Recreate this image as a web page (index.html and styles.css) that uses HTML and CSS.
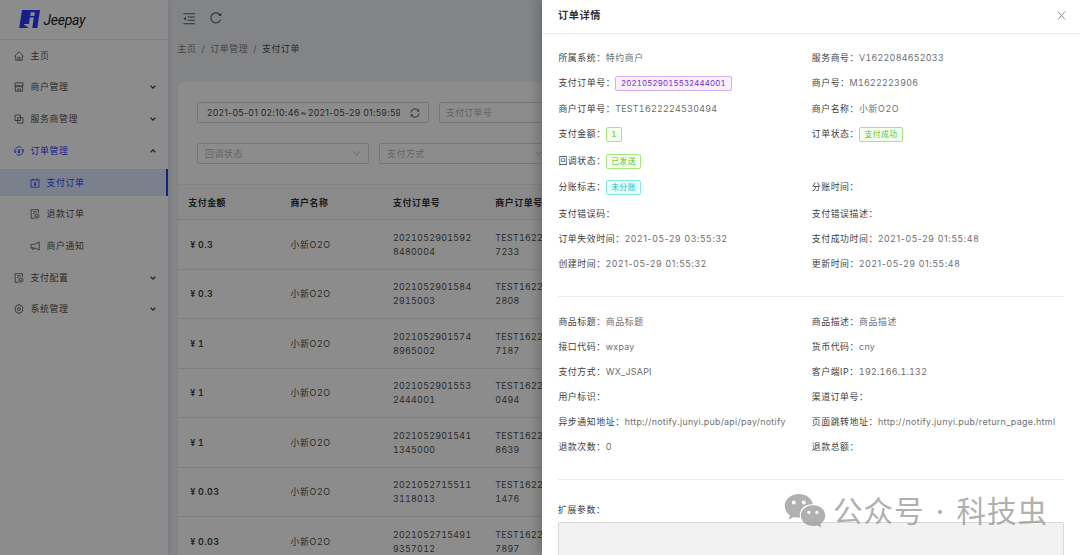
FILE: index.html
```html
<!DOCTYPE html>
<html lang="zh-CN">
<head>
<meta charset="utf-8">
<title>Jeepay</title>
<link rel="stylesheet" href="styles.css">
</head>
<body>
<svg class="defs" aria-hidden="true">
  <symbol id="chev" viewBox="0 0 8 8"><path d="M1.7 2.8 4 5.1 6.3 2.8" stroke-width="1.3"/></symbol>
  <symbol id="chev-l" viewBox="0 0 10 10"><path d="M1.6 2.6 5 7 8.4 2.6" stroke-width=".8"/></symbol>
  <symbol id="doc" viewBox="0 0 10 10"><path d="M4.6 9.3H1.2V.7h7.2v3.5M3 2.9h3.8M3 4.8h1.8"/><circle cx="7" cy="7.2" r="2"/><path d="m6.2 7.2.6.7 1.1-1.3"/></symbol>
</svg>
<div class="app">
  <aside class="side">
    <div class="logo">
      <svg class="logo-mark" viewBox="0 0 21 18"><path class="fill" d="M3 0H21L18.3 18H.2Z"/><path class="cut" d="M11.800 2.300h4l-.4 3.600h-4ZM10.800 7.600h4L13.300 18H8.600l.2-1.500H6.700l.2-1.300H5.100l.1-1.100h3.900c.7 0 1-.4 1.100-1.100Z"/></svg>
      <span class="logo-text">Jeepay</span>
    </div>
    <nav class="menu">
      <div class="item"><svg class="ico" viewBox="0 0 10 10"><path d="M.5 5.200 5 .8l4.500 4.400M1.700 4.500v4.700h6.600V4.500M4 9.200V6.300h2v2.900"/></svg><span>主页</span></div>
      <div class="item"><svg class="ico" viewBox="0 0 10 10"><path d="M1 .8h8v3H1ZM1.400 4v5.200h7.200V4M1 3.800c.3 1.500 2.300 1.500 2.700 0 .3 1.500 2.300 1.500 2.600 0 .4 1.500 2.400 1.500 2.700 0M3.700 9V7h2.600v2"/></svg><span>商户管理</span><svg class="arrow"><use href="#chev"/></svg></div>
      <div class="item"><svg class="ico" viewBox="0 0 10 10"><path d="M1 1h5.500v5.500H1ZM3.700 3.700H9v5.400H3.700Z"/></svg><span>服务商管理</span><svg class="arrow"><use href="#chev"/></svg></div>
      <div class="item active"><svg class="ico" viewBox="0 0 10 10"><path d="M1 6.500a4.300 4.300 0 0 1 6.500-5M9 3.500a4.300 4.300 0 0 1-6.500 5M.7 4.500.9 6.600 2.600 5.800M9.300 5.500 9.100 3.400 7.400 4.200M3.500 3 5 5l1.500-2M5 5v2.600M3.800 5.200h2.400M3.800 6.300h2.400"/></svg><span>订单管理</span><svg class="arrow up"><use href="#chev"/></svg></div>
      <div class="item sub active selected"><svg class="ico" viewBox="0 0 10 10"><path d="M1 1.800h8v7.400H1ZM3 .5v2.200M7 .5v2.200M3.600 3.800 5 5.500l1.400-1.700M5 5.500v2.400M3.800 6h2.400M3.800 7h2.400"/></svg><span>支付订单</span></div>
      <div class="item sub"><svg class="ico"><use href="#doc"/></svg><span>退款订单</span></div>
      <div class="item sub"><svg class="ico" viewBox="0 0 10 10"><path d="M9.200 1v8L4.500 6.900H1V3.300h3.500ZM1.900 7c0 2 2.400 2 2.400 0"/></svg><span>商户通知</span></div>
      <div class="item"><svg class="ico"><use href="#doc"/></svg><span>支付配置</span><svg class="arrow"><use href="#chev"/></svg></div>
      <div class="item"><svg class="ico" viewBox="0 0 10 10"><path d="M3.900.7h2.200l.4 1.300 1.300-.2 1.200 2L8.200 5l.8 1.200-1.200 2-1.300-.2-.4 1.300H3.900L3.500 8l-1.300.2-1.200-2L1.800 5 1 3.800l1.200-2 1.300.2Z"/><circle cx="5" cy="5" r="1.500"/></svg><span>系统管理</span><svg class="arrow"><use href="#chev"/></svg></div>
    </nav>
  </aside>
  <main class="main">
    <div class="tools">
      <svg class="fold" viewBox="0 0 13 12"><path d="M.4.7h12.200M4.700 4.200h7.600M4.700 7.600h7.600M.4 11.200h12.200"/><path class="solid" d="M3.100 3.900v4L.5 5.900Z"/></svg>
      <svg class="reload" viewBox="0 0 12 12"><path d="M10.600 7.600A5 5 0 1 1 10 3"/><path class="solid" d="M11.300.8v3.300L8.200 3.800Z"/></svg>
    </div>
    <div class="crumb"><span>主页</span><i>/</i><span>订单管理</span><i>/</i><b>支付订单</b></div>
    <section class="card">
      <div class="filters">
        <div class="field date"><span class="d1">2021-05-01 02:10:46</span><span class="tilde">~</span><span class="d2">2021-05-29 01:59:59</span><svg class="sync" viewBox="0 0 10 10"><path d="M.8 4.500a4.200 4.200 0 0 1 7.800-1.600M9.200 5.500a4.200 4.200 0 0 1-7.800 1.600M8.800 1.300v1.900H7M1.200 8.700V6.800H3"/></svg></div>
        <div class="field order">支付订单号</div>
      </div>
      <div class="filters">
        <div class="field select">回调状态<svg class="caret"><use href="#chev-l"/></svg></div>
        <div class="field select">支付方式<svg class="caret"><use href="#chev-l"/></svg></div>
      </div>
      <div class="table">
        <div class="tr th"><span>支付金额</span><span>商户名称</span><span>支付订单号</span><span>商户订单号</span></div>
        <div class="tr"><b>¥ 0.3</b><span>小新O2O</span><span class="num">2021052901592<br>8480004</span><span class="num">TEST1622<br>7233</span></div>
        <div class="tr"><b>¥ 0.3</b><span>小新O2O</span><span class="num">2021052901584<br>2915003</span><span class="num">TEST1622<br>2808</span></div>
        <div class="tr"><b>¥ 1</b><span>小新O2O</span><span class="num">2021052901574<br>8965002</span><span class="num">TEST1622<br>7187</span></div>
        <div class="tr"><b>¥ 1</b><span>小新O2O</span><span class="num">2021052901553<br>2444001</span><span class="num">TEST1622<br>0494</span></div>
        <div class="tr"><b>¥ 1</b><span>小新O2O</span><span class="num">2021052901541<br>1345000</span><span class="num">TEST1622<br>8639</span></div>
        <div class="tr"><b>¥ 0.03</b><span>小新O2O</span><span class="num">2021052715511<br>3118013</span><span class="num">TEST1622<br>1476</span></div>
        <div class="tr"><b>¥ 0.03</b><span>小新O2O</span><span class="num">2021052715491<br>9357012</span><span class="num">TEST1622<br>7897</span></div>
      </div>
    </section>
  </main>
</div>
<div class="mask"></div>
<div class="drawer">
  <header class="drawer-head"><span>订单详情</span><svg class="close" viewBox="0 0 9 9"><path d="m1 .6 7 7.800M8 .6 1 8.400"/></svg></header>
  <div class="drawer-body">
    <div class="desc first">
      <p>所属系统：<span>特约商户</span></p><p>服务商号：<span class="num">V1622084652033</span></p>
      <p>支付订单号：<em class="tag purple">20210529015532444001</em></p><p>商户号：<span class="num">M1622223906</span></p>
      <p>商户订单号：<span class="num">TEST1622224530494</span></p><p>商户名称：<span>小新O2O</span></p>
      <p>支付金额：<em class="tag green">1</em></p><p>订单状态：<em class="tag green">支付成功</em></p>
      <p>回调状态：<em class="tag green">已发送</em></p><p></p>
      <p>分账标志：<em class="tag cyan">未分账</em></p><p>分账时间：</p>
      <p>支付错误码：</p><p>支付错误描述：</p>
      <p>订单失效时间：<span class="time">2021-05-29 03:55:32</span></p><p>支付成功时间：<span class="time">2021-05-29 01:55:48</span></p>
      <p>创建时间：<span class="time">2021-05-29 01:55:32</span></p><p>更新时间：<span class="time">2021-05-29 01:55:48</span></p>
    </div>
    <div class="desc second">
      <p>商品标题：<span>商品标题</span></p><p>商品描述：<span>商品描述</span></p>
      <p>接口代码：<span class="lat">wxpay</span></p><p>货币代码：<span class="lat">cny</span></p>
      <p>支付方式：<span class="lat">WX_JSAPI</span></p><p>客户端IP：<span class="num">192.166.1.132</span></p>
      <p>用户标识：</p><p>渠道订单号：</p>
      <p>异步通知地址：<span class="lat">http://notify.junyi.pub/api/pay/notify</span></p><p>页面跳转地址：<span class="lat page">http://notify.junyi.pub/return_page.html</span></p>
      <p>退款次数：<span class="num">0</span></p><p>退款总额：</p>
    </div>
    <div class="ext"><p>扩展参数：</p><div class="area"></div></div>
  </div>
</div>
<div class="watermark">
  <svg viewBox="0 0 42 36"><path fill-rule="evenodd" d="M15 1C7 1 .7 6.200.7 13c0 3.800 2 7 5.200 9.200L4.800 26.500l5-2.600c1.900.5 4.200.8 6.300.6C14.500 17 20 10.800 29 11.300 27.500 5 21.700 1 15 1ZM9.800 7.600a2 2 0 1 1 0 4 2 2 0 0 1 0-4Zm10 0a2 2 0 1 1 0 4 2 2 0 0 1 0-4Z"/><path fill-rule="evenodd" d="M29 12.300c-7 0-12.200 4.500-12.200 10.300S22 33 29 33c1.500 0 3-.2 4.300-.6l4 2.100-.9-3.500c3-2 4.900-5 4.900-8.400 0-5.800-5.300-10.300-12.300-10.300Zm-4.100 5.400a1.700 1.700 0 1 1 0 3.400 1.700 1.700 0 0 1 0-3.400Zm8 0a1.700 1.700 0 1 1 0 3.400 1.700 1.700 0 0 1 0-3.400Z"/></svg>
  <span>公众号</span><span class="dot">·</span><span>科技虫</span>
</div>
</body>
</html>
```
FILE: styles.css
```css
* { box-sizing: border-box; }
body {
  margin: 0;
  width: 1080px;
  height: 555px;
  overflow: hidden;
  position: relative;
  font-family: Inter, "Noto Sans CJK SC", sans-serif;
  font-size: 8.9px;
  letter-spacing: .6px;
  line-height: 14px;
  color: #505050;
  font-feature-settings: "tnum";
}
p { margin: 0; white-space: nowrap; }
svg { fill: none; stroke: currentColor; stroke-width: .8; flex: none; overflow: visible; }
.defs { position: absolute; width: 0; height: 0; }
.num { letter-spacing: .28px; }
.time { letter-spacing: .67px; font-feature-settings: normal; }
.lat { letter-spacing: .28px; }
.page { letter-spacing: .34px; }

.app { display: flex; height: 555px; overflow: hidden; background: #edf0f5; }
.side { width: 168px; flex: none; background: #fff; box-shadow: 1px 0 4px rgba(0,21,41,.1); }
.logo { height: 40px; display: flex; align-items: center; padding: 0 0 2px 18.5px; gap: 4px; border-bottom: 1px solid #e6e6e6; }
.logo-mark { width: 21px; height: 18px; stroke: none; }
.logo-mark .fill { fill: #2b38ff; }
.logo-mark .cut { fill: #fff; }
.logo-text { font: italic 400 14px/20px Roboto, sans-serif; letter-spacing: -.25px; color: #222; padding-top: 3px; }
.menu { padding-top: 2.5px; display: flex; flex-direction: column; gap: 5.1px; }
.item { height: 26.6px; display: flex; align-items: center; padding: 0 11.5px 0 14px; gap: 6.5px; }
.item.sub { padding-left: 30px; }
.item.active { color: #2f3dff; }
.item.selected { background: #dfecff; border-right: 2px solid #2b38ff; }
.ico { width: 10px; height: 10px; }
.arrow { width: 8px; height: 8px; margin-left: auto; color: #404040; }
.arrow.up { transform: rotate(180deg); }

.main { flex: 1; min-width: 0; padding-left: 9.5px; }
.tools { height: 35px; display: flex; align-items: center; gap: 14.5px; padding-left: 5.5px; color: #585858; }
.fold { width: 12.5px; height: 11.5px; margin-top: 2px; stroke-width: 1.1; }
.reload { width: 12px; height: 12px; stroke-width: 1.1; }
.solid { fill: currentColor; stroke: none; }
.crumb { height: 47px; padding-top: 7px; display: flex; color: #7e7e7e; }
.crumb i { font-style: normal; margin: 0 5px; }
.crumb b { font-weight: 400; color: #484848; }
.card { background: #fff; border-radius: 6px 0 0 0; height: 480px; padding-top: 20px; }
.filters { display: flex; gap: 10px; padding-left: 19.5px; margin-bottom: 20px; }
.field { height: 21px; border: 1px solid #d9d9d9; border-radius: 2px; display: flex; align-items: center; color: #b5b5b5; flex: none; padding: 0 7px; }
.date { width: 232px; color: #484848; letter-spacing: .26px; font-feature-settings: normal; padding: 0 8px 0 9px; }
.date span { overflow: hidden; white-space: nowrap; }
.d1, .d2 { width: 91.5px; }
.date .tilde { width: 9.5px; padding-left: 2px; }
.sync { width: 10px; height: 10px; margin-left: auto; stroke-width: .9; }
.order { width: 172px; padding-left: 6px; letter-spacing: .3px; }
.select { width: 172px; }
.caret { width: 9px; height: 9px; margin-left: auto; }
.table { border-top: 1px solid #efefef; margin-top: 20px; }
.tr { height: 49.5px; display: grid; grid-template-columns: repeat(4, 102.4px); align-items: center; padding: 1px 0 0 10.7px; border-bottom: 1px solid #e8e8e8; }
.tr b { font-weight: 600; padding-left: 2px; color: #404040; letter-spacing: .5px; word-spacing: -.6px; }
.th { height: 35px; font-weight: 600; color: #303030; background: #fcfcfc; }

.mask { position: absolute; inset: 0; background: rgba(0,0,0,.45); }
.drawer { position: absolute; top: 0; right: 0; width: 538px; height: 555px; background: #fff; box-shadow: -4px 0 10px rgba(0,0,0,.2); overflow: hidden; }
.drawer-head { height: 34px; display: flex; align-items: center; justify-content: space-between; padding: 0 14px 3px 16px; border-bottom: 1px solid #ebebeb; font-size: 10.2px; font-weight: 600; color: #303030; }
.close { width: 9px; height: 9px; color: #888; stroke-width: .95; margin-top: 1px; }
.drawer-body { padding: 0 16px; }
.desc { display: grid; grid-template-columns: 253.3px 253.3px; color: #404040; border-bottom: 1px solid #ebebeb; }
.desc p { padding-left: .4px; }
.desc span { color: #6e6e6e; }
.first { height: 263px; padding-top: 17px; grid-template-rows: 25.3px 25.9px 25.3px 26.5px 26.5px 26.2px 25.2px 25.2px 15px; }
.second { height: 183px; padding-top: 17.6px; grid-auto-rows: 25.1px; }
.tag { display: inline-block; height: 15px; line-height: 13px; border: 1px solid; border-radius: 2px; padding: 0 4.4px; font-style: normal; font-size: 7.8px; letter-spacing: .5px; vertical-align: top; }
.purple { color: #722ed1; background: #f9f0ff; border-color: #d3adf7; letter-spacing: .18px; padding: 0 4.8px; }
.green { color: #52c41a; background: #f6ffed; border-color: #a5e67c; }
.cyan { color: #13c2c2; background: #e6fffb; border-color: #87e8de; }
.ext { padding-top: 23px; color: #404040; }
.area { margin-top: 5px; height: 50px; border: 1px solid #d9d9d9; border-radius: 2px; background: #f2f2f2; }
.watermark { position: absolute; left: 784px; top: 493px; display: flex; align-items: center; color: #929292; opacity: .72; font-size: 29.5px; line-height: 36px; letter-spacing: 1px; }
.watermark svg { width: 42px; height: 36px; fill: currentColor; stroke: none; margin-right: 7px; }
.watermark .dot { width: 32px; text-align: center; }
```
